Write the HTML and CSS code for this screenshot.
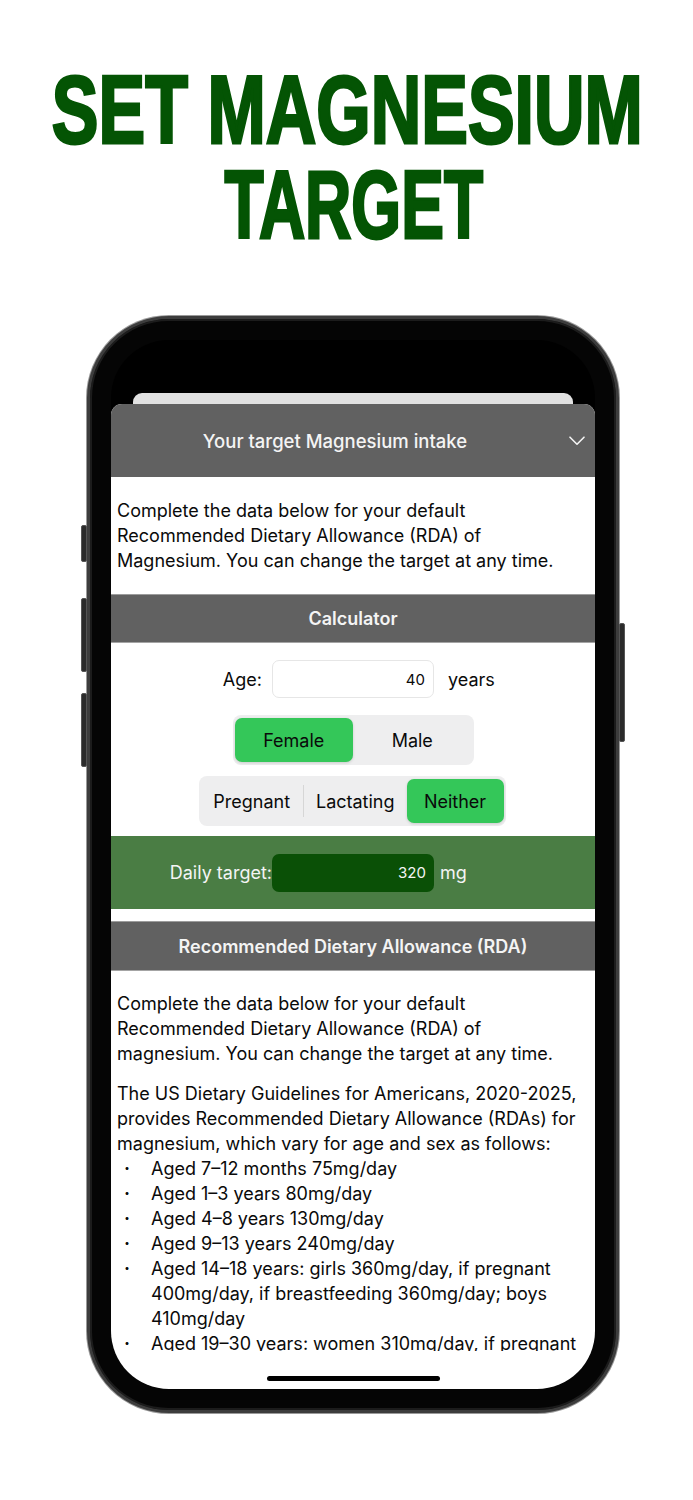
FILE: index.html
```html
<!DOCTYPE html>
<html lang="en">
<head>
<meta charset="utf-8">
<title>Set Magnesium Target</title>
<link rel="stylesheet" href="styles.css">
</head>
<body>
<h1 class="title"><span class="title-line line-1">SET MAGNESIUM</span><span class="title-line line-2">TARGET</span></h1>
<div class="phone">
  <span class="side-btn btn-l1"></span>
  <span class="side-btn btn-l2"></span>
  <span class="side-btn btn-l3"></span>
  <span class="side-btn btn-r1"></span>
  <div class="screen">
    <div class="back-card"></div>
    <div class="sheet">
      <div class="sheet-head">
        <span class="sheet-title">Your target Magnesium intake</span>
        <svg class="chevron" width="16" height="10" viewBox="0 0 16 10"><path d="M1 1.2 L8 8.2 L15 1.2" fill="none" stroke="#f2f2f2" stroke-width="1.6" stroke-linecap="round" stroke-linejoin="round"/></svg>
      </div>
      <div class="scroll">
        <p class="para intro">Complete the data below for your default Recommended Dietary Allowance (RDA) of Magnesium. You can change the target at any time.</p>
        <div class="section-head">Calculator</div>
        <div class="calc">
          <div class="field-row">
            <span class="row-label">Age:</span>
            <div class="field">40</div>
            <span class="row-unit">years</span>
          </div>
          <div class="seg seg-sex">
            <div class="seg-item active">Female</div>
            <div class="seg-item">Male</div>
          </div>
          <div class="seg seg-preg">
            <div class="seg-item">Pregnant</div>
            <div class="seg-item divided">Lactating</div>
            <div class="seg-item active">Neither</div>
          </div>
        </div>
        <div class="target-band">
          <div class="field-row band-row">
            <span class="row-label">Daily target:</span>
            <div class="field dark">320</div>
            <span class="row-unit">mg</span>
          </div>
        </div>
        <div class="section-head rda-head">Recommended Dietary Allowance (RDA)</div>
        <div class="rda-body">
          <p class="para">Complete the data below for your default Recommended Dietary Allowance (RDA) of magnesium. You can change the target at any time.</p>
          <p class="para">The US Dietary Guidelines for Americans, 2020-2025, provides Recommended Dietary Allowance (RDAs) for magnesium, which vary for age and sex as follows:</p>
          <ul class="rda-list">
            <li>Aged 7–12 months 75mg/day</li>
            <li>Aged 1–3 years 80mg/day</li>
            <li>Aged 4–8 years 130mg/day</li>
            <li>Aged 9–13 years 240mg/day</li>
            <li>Aged 14–18 years: girls 360mg/day, if pregnant 400mg/day, if breastfeeding 360mg/day; boys 410mg/day</li>
            <li>Aged 19–30 years: women 310mg/day, if pregnant 350mg/day, if breastfeeding 310mg/day; men 400mg/day</li>
          </ul>
        </div>
      </div>
      <div class="home-area"><div class="home-bar"></div></div>
    </div>
  </div>
</div>
</body>
</html>
```
FILE: styles.css
```css
* { box-sizing: border-box; }
html, body { margin: 0; padding: 0; background: #fff; }
body {
  width: 693px;
  height: 1500px;
  overflow: hidden;
  font-family: "Inter", "Liberation Sans", sans-serif;
  color: #0a0a0a;
}

.title {
  margin: 0;
  padding-top: 62px;
  height: 316px;
  display: flex;
  flex-direction: column;
  align-items: center;
  font-family: "Liberation Sans", "Arial", sans-serif;
  font-weight: 700;
  font-size: 96px;
  color: #045404;
  -webkit-text-stroke: 3px #045404;
  white-space: nowrap;
}
.title-line {
  display: block;
  line-height: 95px;
  height: 95px;
  transform-origin: center 50%;
}
.line-1 { transform: scaleX(0.729); margin-left: 2px; }
.line-2 { transform: scaleX(0.667); margin-left: 14px; }

.phone {
  position: relative;
  margin-left: 87px;
  width: 532px;
  height: 1097px;
  border-radius: 82px;
  background: #050505;
  border: 3px solid #3d3d3d;
  box-shadow: 0 0 0 1px #9a9a9a, inset 0 0 0 2px #1c1c1c;
  padding: 21px;
}
.side-btn {
  position: absolute;
  width: 6px;
  background: #2b2b2b;
  border: 1px solid #555;
  border-radius: 2px;
}
.btn-l1 { left: -9px; top: 206px; height: 37px; }
.btn-l2 { left: -9px; top: 279px; height: 74px; }
.btn-l3 { left: -9px; top: 374px; height: 74px; }
.btn-r1 { right: -9px; top: 304px; height: 119px; }

.screen {
  height: 100%;
  border-radius: 58px;
  background: #000;
  overflow: hidden;
  padding-top: 53px;
  display: flex;
  flex-direction: column;
}
.back-card {
  margin: 0 22px -12px;
  height: 23px;
  background: #e1e1e1;
  border-radius: 9px 9px 0 0;
  flex: none;
}
.sheet {
  position: relative;
  flex: 1;
  background: #fff;
  border-radius: 11px 11px 0 0;
  display: flex;
  flex-direction: column;
  overflow: hidden;
}
.sheet-head {
  flex: none;
  height: 73px;
  background: #616161;
  display: flex;
  align-items: center;
  justify-content: center;
  position: relative;
  padding-right: 36px;
}
.sheet-title {
  color: #f4f4f4;
  font-size: 18.5px;
  font-weight: 500;
}
.chevron {
  position: absolute;
  right: 10px;
  top: 32px;
}

.scroll {
  height: 874px;
  overflow: hidden;
  flex: none;
}
.para {
  margin: 0;
  padding: 0 6px;
  font-size: 18px;
  line-height: 25px;
}
.intro { padding-top: 21px; padding-bottom: 21px; }

.section-head {
  height: 49px;
  background: #616161;
  border-top: 1px solid #9c9c9c;
  border-bottom: 1px solid #a4a4a4;
  color: #f4f4f4;
  font-size: 18px;
  font-weight: 600;
  display: flex;
  align-items: center;
  justify-content: center;
}
.rda-head { height: 50px; margin-top: 12px; }

.calc {
  padding: 17px 0 10px;
  display: flex;
  flex-direction: column;
  align-items: center;
}
.field-row {
  width: 100%;
  display: grid;
  grid-template-columns: 1fr 162px 1fr;
  align-items: center;
  font-size: 18px;
}
.row-label { text-align: right; padding-right: 10px; }
.row-unit { padding-left: 14px; }
.field {
  height: 38px;
  border-radius: 7px;
  background: #fff;
  border: 1px solid #e6e6e6;
  display: flex;
  align-items: center;
  justify-content: flex-end;
  padding-right: 8px;
  font-size: 15px;
}

.seg {
  display: flex;
  background: #eeeeef;
  border-radius: 8px;
  padding: 3px 2px;
  height: 50px;
  margin-top: 17px;
}
.seg-sex { width: 241px; }
.seg-preg { width: 307px; margin-top: 11px; margin-left: -2px; }
.seg-item {
  flex: 1;
  display: flex;
  align-items: center;
  justify-content: center;
  font-size: 18px;
  border-radius: 7px;
  position: relative;
}
.seg-item.active {
  background: #34c759;
  box-shadow: 0 1px 3px rgba(0,0,0,0.15);
}
.seg-preg .seg-item:nth-child(3) { flex: 0 0 97px; }
.seg-item.divided { border-left: 1px solid #d6d6d6; border-radius: 0; margin: 6px 0; }

.target-band {
  height: 73px;
  background: #4a7d44;
  display: flex;
  align-items: center;
}
.band-row { color: #f4f4f4; }
.band-row .row-label { padding-right: 0; }
.band-row .row-unit { padding-left: 6px; }
.field.dark {
  background: #0a5006;
  border: none;
  color: #f4f4f4;
}

.rda-body { padding-top: 20px; }
.rda-body .para + .para { margin-top: 15px; }
.rda-list {
  margin: 0;
  padding: 0 6px 0 40px;
  list-style: none;
  font-size: 18px;
  line-height: 25px;
}
.rda-list li { position: relative; }
.rda-list li::before {
  content: "·";
  position: absolute;
  left: -27px;
  font-weight: 700;
}

.home-area {
  flex: 1;
  display: flex;
  justify-content: center;
  padding-top: 25px;
}
.home-bar {
  width: 173px;
  height: 5px;
  border-radius: 3px;
  background: #000;
}
```
